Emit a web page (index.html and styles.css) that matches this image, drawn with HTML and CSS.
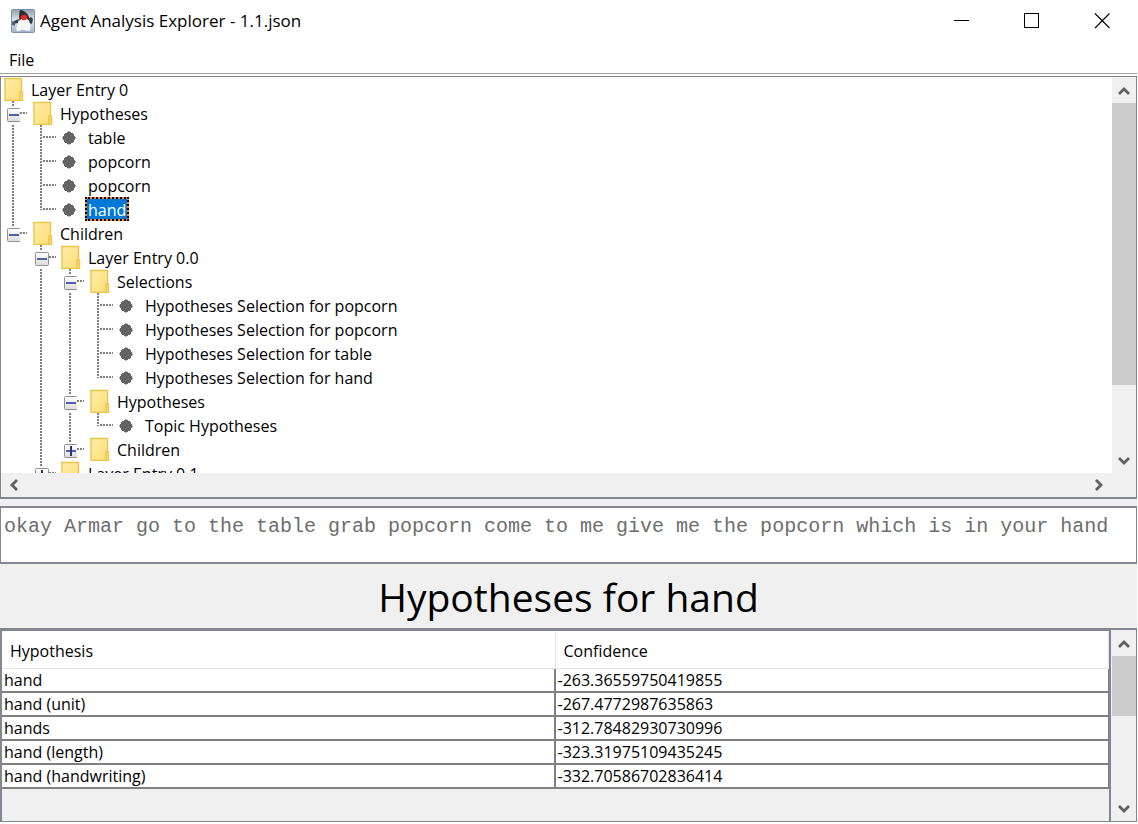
FILE: index.html
```html
<!DOCTYPE html>
<html lang="en">
<head>
<meta charset="utf-8">
<title>Agent Analysis Explorer - 1.1.json</title>
<link rel="stylesheet" href="styles.css">
</head>
<body>
<svg class="defs" aria-hidden="true">
  <defs>
    <linearGradient id="fold" x1="0" y1="0" x2="1" y2="1"><stop offset="0" stop-color="#ffeea8"/><stop offset="1" stop-color="#fddd77"/></linearGradient>
    <linearGradient id="box" x1="0" y1="0" x2="0" y2="1"><stop offset="0" stop-color="#fff"/><stop offset="1" stop-color="#dcdcdc"/></linearGradient>
    <linearGradient id="duke" x1="0" y1="0" x2="0" y2="1"><stop offset="0" stop-color="#8f9fae"/><stop offset=".5" stop-color="#e4e9ee"/><stop offset="1" stop-color="#9fb2c4"/></linearGradient>
    <symbol id="folder" viewBox="0 0 20 24"><rect x="1" y="1" width="17" height="22" fill="url(#fold)"/><path d="M0 1.500H17.500V15M1 1V23.500H18.500V15H16V23" fill="none" stroke="#eac64c" stroke-width="1.400"/></symbol>
    <symbol id="leaf" viewBox="0 0 14 14"><path d="M7 0V14M0 7H14" stroke="#646464"/><path d="M5 1H9V2H11V3H12V5H13V9H12V11H11V12H9V13H5V12H3V11H2V9H1V5H2V3H3V2H5Z" fill="#646464"/></symbol>
    <symbol id="minus" viewBox="0 0 14 14"><rect x=".5" y=".5" width="13" height="13" rx="1" fill="url(#box)" stroke="#919191"/><path d="M2 7H12" stroke="#4b63a7" stroke-width="2"/></symbol>
    <symbol id="plus" viewBox="0 0 14 14"><rect x=".5" y=".5" width="13" height="13" rx="1" fill="url(#box)" stroke="#919191"/><path d="M2 7H12" stroke="#4b63a7" stroke-width="2"/><path d="M7 2V12" stroke="#27396e" stroke-width="2"/></symbol>
    <symbol id="up" viewBox="0 0 12 10"><path d="M1 8L6 3L11 8" fill="none" stroke="#606060" stroke-width="2.800"/></symbol>
    <symbol id="down" viewBox="0 0 12 10"><path d="M1 2L6 7L11 2" fill="none" stroke="#606060" stroke-width="2.800"/></symbol>
    <symbol id="left" viewBox="0 0 10 12"><path d="M8 1L3 6L8 11" fill="none" stroke="#606060" stroke-width="2.800"/></symbol>
    <symbol id="right" viewBox="0 0 10 12"><path d="M2 1L7 6L2 11" fill="none" stroke="#606060" stroke-width="2.800"/></symbol>
  </defs>
</svg>

<header class="titlebar">
  <svg class="app-icon" viewBox="0 0 24 24" aria-hidden="true">
    <rect x=".5" y=".5" width="23" height="23" rx="1" fill="url(#duke)" stroke="#7d95ac"/>
    <path d="M3 12L8 10L7 14L2 15ZM17 10L20 8L22 10L21 15L18 14Z" fill="#3a3d42"/>
    <path d="M10 9C8 11 7 14 6 17C5 20 5 22 7 22C9 22 10 20 13 21C16 22 18 22 19 21C20 19 19 15 18 11L14 9Z" fill="#f6f6f6"/>
    <path d="M9 1C12 1 15 3 17 6C18 8 19 10 18.500 12L15 9L10 10L8.500 12C8 8 8 4 9 1Z" fill="#2c2c2e"/>
    <path d="M1 12L4 13V17L1 16Z" fill="#4d6478"/>
    <ellipse cx="13" cy="8.500" rx="3.200" ry="2.800" fill="#e52a2a"/>
  </svg>
  <h1 class="window-title">Agent Analysis Explorer - 1.1.json</h1>
  <div class="window-controls">
    <button type="button" aria-label="Minimize"><svg width="16" height="16" viewBox="0 0 16 16"><path d="M0 7.500H15" stroke="#000"/></svg></button>
    <button type="button" aria-label="Maximize"><svg width="16" height="16" viewBox="0 0 16 16"><rect x=".5" y=".5" width="14" height="14" fill="none" stroke="#000"/></svg></button>
    <button type="button" aria-label="Close"><svg width="16" height="16" viewBox="0 0 16 16"><path d="M1 .5L15.500 15M15.500 .5L1 15" stroke="#000" stroke-width="1.100"/></svg></button>
  </div>
</header>

<nav class="menubar"><button type="button">File</button></nav>

<main class="content">
  <section class="tree-pane" aria-label="Layer tree">
    <div class="tree-view">
      <div class="tree">
        <div class="row"><svg class="folder"><use href="#folder"/></svg><span class="label">Layer Entry 0</span></div>
        <ul class="wide">
          <li>
            <div class="gutter"><button type="button" class="toggle" aria-label="Collapse"><svg><use href="#minus"/></svg></button></div>
            <div>
              <div class="row"><svg class="folder"><use href="#folder"/></svg><span class="label">Hypotheses</span></div>
              <ul class="narrow">
                <li><div class="gutter"></div><div class="row"><svg class="leaf"><use href="#leaf"/></svg><span class="label">table</span></div></li>
                <li><div class="gutter"></div><div class="row"><svg class="leaf"><use href="#leaf"/></svg><span class="label">popcorn</span></div></li>
                <li><div class="gutter"></div><div class="row"><svg class="leaf"><use href="#leaf"/></svg><span class="label">popcorn</span></div></li>
                <li><div class="gutter"></div><div class="row"><svg class="leaf"><use href="#leaf"/></svg><span class="label selected">hand</span></div></li>
              </ul>
            </div>
          </li>
          <li>
            <div class="gutter"><button type="button" class="toggle" aria-label="Collapse"><svg><use href="#minus"/></svg></button></div>
            <div>
              <div class="row"><svg class="folder"><use href="#folder"/></svg><span class="label">Children</span></div>
              <ul class="narrow">
                <li>
                  <div class="gutter"><button type="button" class="toggle" aria-label="Collapse"><svg><use href="#minus"/></svg></button></div>
                  <div>
                    <div class="row"><svg class="folder"><use href="#folder"/></svg><span class="label">Layer Entry 0.0</span></div>
                    <ul class="wide">
                      <li>
                        <div class="gutter"><button type="button" class="toggle" aria-label="Collapse"><svg><use href="#minus"/></svg></button></div>
                        <div>
                          <div class="row"><svg class="folder"><use href="#folder"/></svg><span class="label">Selections</span></div>
                          <ul class="narrow">
                            <li><div class="gutter"></div><div class="row"><svg class="leaf"><use href="#leaf"/></svg><span class="label">Hypotheses Selection for popcorn</span></div></li>
                            <li><div class="gutter"></div><div class="row"><svg class="leaf"><use href="#leaf"/></svg><span class="label">Hypotheses Selection for popcorn</span></div></li>
                            <li><div class="gutter"></div><div class="row"><svg class="leaf"><use href="#leaf"/></svg><span class="label">Hypotheses Selection for table</span></div></li>
                            <li><div class="gutter"></div><div class="row"><svg class="leaf"><use href="#leaf"/></svg><span class="label">Hypotheses Selection for hand</span></div></li>
                          </ul>
                        </div>
                      </li>
                      <li>
                        <div class="gutter"><button type="button" class="toggle" aria-label="Collapse"><svg><use href="#minus"/></svg></button></div>
                        <div>
                          <div class="row"><svg class="folder"><use href="#folder"/></svg><span class="label">Hypotheses</span></div>
                          <ul class="narrow">
                            <li><div class="gutter"></div><div class="row"><svg class="leaf"><use href="#leaf"/></svg><span class="label">Topic Hypotheses</span></div></li>
                          </ul>
                        </div>
                      </li>
                      <li>
                        <div class="gutter"><button type="button" class="toggle" aria-label="Expand"><svg><use href="#plus"/></svg></button></div>
                        <div class="row"><svg class="folder"><use href="#folder"/></svg><span class="label">Children</span></div>
                      </li>
                    </ul>
                  </div>
                </li>
                <li>
                  <div class="gutter"><button type="button" class="toggle" aria-label="Expand"><svg><use href="#plus"/></svg></button></div>
                  <div class="row"><svg class="folder"><use href="#folder"/></svg><span class="label">Layer Entry 0.1</span></div>
                </li>
              </ul>
            </div>
          </li>
        </ul>
      </div>
    </div>
    <div class="scroll-v">
      <button type="button" aria-label="Scroll up"><svg width="12" height="10"><use href="#up"/></svg></button>
      <div class="track"><div class="thumb tree-thumb"></div></div>
      <button type="button" aria-label="Scroll down"><svg width="12" height="10"><use href="#down"/></svg></button>
    </div>
    <div class="scroll-h">
      <button type="button" aria-label="Scroll left"><svg width="10" height="12"><use href="#left"/></svg></button>
      <button type="button" aria-label="Scroll right"><svg width="10" height="12"><use href="#right"/></svg></button>
    </div>
  </section>

  <p class="utterance">okay Armar go to the table grab popcorn come to me give me the popcorn which is in your hand</p>

  <h2 class="heading">Hypotheses for hand</h2>

  <section class="table-pane" aria-label="Hypotheses for hand">
    <div class="table-view">
      <table>
        <thead><tr><th scope="col">Hypothesis</th><th scope="col">Confidence</th></tr></thead>
        <tbody>
          <tr><td>hand</td><td>-263.36559750419855</td></tr>
          <tr><td>hand (unit)</td><td>-267.4772987635863</td></tr>
          <tr><td>hands</td><td>-312.78482930730996</td></tr>
          <tr><td>hand (length)</td><td>-323.31975109435245</td></tr>
          <tr><td>hand (handwriting)</td><td>-332.70586702836414</td></tr>
        </tbody>
      </table>
    </div>
    <div class="scroll-v">
      <button type="button" aria-label="Scroll up"><svg width="12" height="10"><use href="#up"/></svg></button>
      <div class="track"><div class="thumb table-thumb"></div></div>
      <button type="button" aria-label="Scroll down"><svg width="12" height="10"><use href="#down"/></svg></button>
    </div>
  </section>
</main>
</body>
</html>
```

FILE: styles.css
```css
* { box-sizing: border-box; }

body {
  margin: 0;
  height: 100vh;
  display: flex;
  flex-direction: column;
  padding: 0 1px 2px 0;
  overflow: hidden;
  background: #fff;
  color: #000;
  font: 16px/24px "Open Sans", Tahoma, sans-serif;
}

button {
  margin: 0;
  padding: 0;
  border: 0;
  background: none;
  color: inherit;
  font: inherit;
}

svg { display: block; }
.defs { position: absolute; width: 0; height: 0; }

/* Window frame */
.titlebar { display: flex; align-items: center; height: 42px; padding-left: 11px; gap: 5px; }
.app-icon { width: 24px; height: 24px; }
.window-title { margin: 0; font: 400 17px/24px "Open Sans", "Segoe UI", sans-serif; }
.window-controls { display: flex; margin-left: auto; }
.window-controls button { width: 70px; height: 40px; display: grid; place-items: center; }

.menubar { height: 32px; border-bottom: 1px solid #a0a0a0; padding: 6px 9px 0; }
.menubar button { display: block; }

.content {
  flex: 1;
  min-height: 0;
  display: flex;
  flex-direction: column;
  margin-top: 2px;
  background: #f0f0f0;
}

/* Tree */
.tree-pane {
  flex: 424 1 0;
  min-height: 0;
  display: grid;
  grid-template: minmax(0, 1fr) 24px / minmax(0, 1fr) 24px;
  border: 1px solid #828790;
  border-bottom-width: 2px;
}
.tree-view { overflow: hidden; background: #fff; padding-left: 3px; }
.tree ul { list-style: none; margin: 0; padding: 0; }
.tree li {
  display: grid;
  background: repeating-linear-gradient(#808080 0 2px, #fff 2px 3px) no-repeat;
}
.wide > li { grid-template-columns: 29px 1fr; background-position: 8px 0; background-size: 2px 100%; }
.narrow > li { grid-template-columns: 28px 1fr; background-position: 7px 0; background-size: 2px 100%; }
.tree li:last-child { background-size: 2px 13px; }
.gutter {
  height: 24px;
  padding: 7px 0 0 3px;
  background: repeating-linear-gradient(90deg, #808080 0 2px, #fff 2px 3px) 10px 11px / 13px 2px no-repeat;
}
.narrow > li > .gutter { padding-left: 2px; }
.toggle { display: block; width: 13px; overflow: hidden; box-shadow: 0 2px #fff, 0 -2px #fff; }
.narrow > li > .gutter .toggle { width: 14px; }
.toggle svg { width: 14px; height: 14px; }
.row { display: flex; align-items: center; height: 24px; }
.folder { width: 20px; height: 24px; margin-right: 4px; }
.leaf { width: 14px; height: 14px; margin: 2px 9px 0 1px; }
.label { height: 24px; padding: 0 3px; white-space: nowrap; line-height: 26px; }
.selected {
  background: #0078d7;
  color: #fff;
  outline: 2px dotted #000;
  outline-offset: -2px;
  box-shadow: inset 0 0 0 2px #ff8728;
}

/* Scroll bars */
.scroll-v { display: flex; flex-direction: column; background: #f0f0f0; }
.scroll-v button { width: 24px; height: 26px; padding-top: 2px; display: grid; place-items: center; }
.track { flex: 1; min-height: 0; }
.thumb { background: #cdcdcd; }
.tree-thumb { height: 82%; }
.table-thumb { height: 43%; }
.scroll-h { display: flex; justify-content: space-between; background: #f0f0f0; }
.scroll-h button { width: 26px; height: 24px; display: grid; place-items: center; }

/* Sentence */
.utterance {
  margin: 7px 0 0;
  min-height: 58px;
  padding: 7px 3px 0;
  border: 2px solid #828790;
  border-width: 2px 1px;
  background: #fff;
  color: #6d6d6d;
  font: 20px/24px "Liberation Mono", "Courier New", monospace;
}

.heading { margin: 0; padding: 9px 0 7px; font-size: 39px; line-height: 48px; font-weight: 400; text-align: center; }

/* Hypothesis table */
.table-pane {
  flex: 193 1 0;
  min-height: 0;
  display: grid;
  grid-template-columns: minmax(0, 1fr) 24px;
  border: 1px solid #828790;
  border-top-width: 2px;
}
.table-view { overflow: hidden; border: solid #828790; border-width: 1px 2px 0 1px; margin-right: 1px; }
table { width: 100%; border-spacing: 0; table-layout: fixed; background: #fff; }
th {
  height: 38px;
  padding: 4px 8px 0;
  text-align: left;
  font-weight: 400;
  border-right: 1px solid #e5e5e5;
  border-bottom: 1px solid #e5e5e5;
}
td { height: 24px; padding: 0 2px; line-height: 22px; border-right: 2px solid #808080; border-bottom: 2px solid #808080; }
td:last-child { border-right-width: 1px; }
```
